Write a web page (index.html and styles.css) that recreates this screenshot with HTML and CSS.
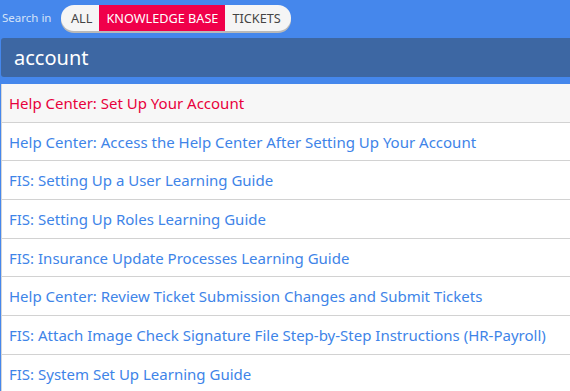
FILE: index.html
```html
<!DOCTYPE html>
<html lang="en">
<head>
    <meta charset="UTF-8">
    <meta name="viewport" content="width=device-width, initial-scale=1.0">
    <title>Knowledge Base Search</title>
    <link rel="stylesheet" href="styles.css">
</head>
<body>
    <div class="search-bar">
        <div class="scope">
            <span class="scope-label">Search in</span>
            <div class="scope-pill">
                <span class="scope-option">ALL</span>
                <span class="scope-option active">KNOWLEDGE BASE</span>
                <span class="scope-option">TICKETS</span>
            </div>
        </div>
        <div class="search-input">account</div>
    </div>

    <ul class="results">
        <li class="result hover"><a href="#">Help Center: Set Up Your Account</a></li>
        <li class="result"><a href="#">Help Center: Access the Help Center After Setting Up Your Account</a></li>
        <li class="result"><a href="#">FIS: Setting Up a User Learning Guide</a></li>
        <li class="result"><a href="#">FIS: Setting Up Roles Learning Guide</a></li>
        <li class="result"><a href="#">FIS: Insurance Update Processes Learning Guide</a></li>
        <li class="result"><a href="#">Help Center: Review Ticket Submission Changes and Submit Tickets</a></li>
        <li class="result"><a href="#">FIS: Attach Image Check Signature File Step-by-Step Instructions (HR-Payroll)</a></li>
        <li class="result"><a href="#">FIS: System Set Up Learning Guide</a></li>
    </ul>
</body>
</html>
```

FILE: styles.css
```css
html, body {
    margin: 0;
    padding: 0;
}
body {
    font-family: "Noto Sans", "Open Sans", sans-serif;
    background-color: #4587ec;
    height: 391px;
    overflow: hidden;
}
.search-bar {
    padding: 4px 0 6px 1px;
}
.scope {
    display: flex;
    align-items: center;
    height: 27px;
    padding-left: 1px;
}
.scope-label {
    color: #d3e2f8;
    font-size: 11.5px;
    width: 59px;
}
.scope-pill {
    display: flex;
    height: 26px;
    border-radius: 13px;
    overflow: hidden;
    background-color: #f5f5f5;
    box-shadow: 0 2px 0 #b9b9b9;
}
.scope-option {
    display: flex;
    align-items: center;
    padding: 0 7px;
    font-size: 12.7px;
    color: #444;
}
.scope-option:first-child {
    padding-left: 10px;
}
.scope-option:last-child {
    padding-right: 10px;
}
.scope-option.active {
    background-color: #f0004a;
    color: #fff;
}
.search-input {
    margin-top: 7px;
    height: 39px;
    line-height: 39px;
    background-color: #3d67a3;
    border-radius: 3px 0 0 3px;
    color: #fff;
    font-size: 20px;
    padding-left: 13px;
}
.results {
    list-style: none;
    margin: 1px 0 0 1px;
    padding: 0;
    background-color: #fff;
    border-left: 1px solid #d6d6d6;
}
.result {
    padding: 9px 7px 7px;
    line-height: 21.67px;
    border-bottom: 1px solid #d2d2d2;
    font-size: 15px;
    white-space: nowrap;
}
.result a {
    color: #3e84e8;
    text-decoration: none;
}
.result.hover {
    background-color: #f7f7f7;
}
.result.hover a {
    color: #e8003c;
}
```
